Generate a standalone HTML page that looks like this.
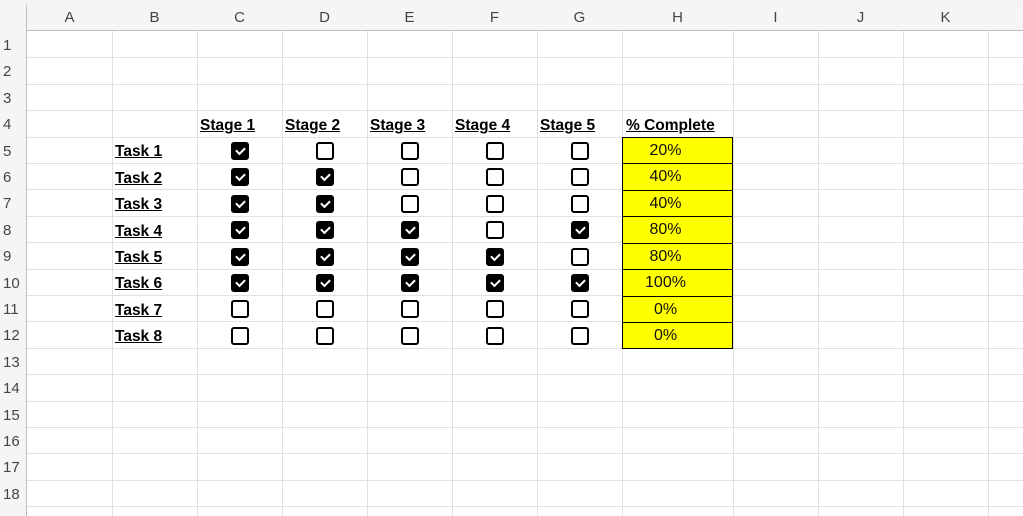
<!DOCTYPE html>
<html><head><meta charset="utf-8"><style>
body{margin:0;width:1023px;height:516px;overflow:hidden;background:#fff;font-family:"Liberation Sans",sans-serif;position:relative}
.a{position:absolute}
.vl{position:absolute;top:31px;bottom:0;width:1px;background:#e1e1e1}
.hl{position:absolute;left:27px;right:0;height:1px;background:#e1e1e1}
.ch{position:absolute;top:5px;height:26px;line-height:26px;text-align:center;font-size:15px;color:#444}
.rh{position:absolute;left:0;width:24px;text-align:left;padding-left:3px;font-size:15px;color:#444}
.b{position:absolute;font-weight:bold;font-size:15.5px;text-decoration:underline;color:#000}
.cb{position:absolute;width:14px;height:14px;border:2px solid #000;border-radius:3px;background:#fff}
.cb.on{background:#000}
.cb.on:after{content:"";position:absolute;left:3px;width:7px;height:4px;border-left:2px solid #fff;border-bottom:2px solid #fff;transform:rotate(-45deg);transform-origin:center;top:3px}
.y{position:absolute;left:622px;width:111px;background:#ffff00;border:1px solid #000;box-sizing:border-box;text-align:center;padding-right:24px;font-size:16px;line-height:26px;color:#111}
</style></head><body>
<div class="a" style="left:0;top:0;width:1023px;height:5px;background:#f3f3f3"></div>
<div class="a" style="left:0;top:5px;width:1023px;height:26px;background:#f5f5f5;border-bottom:1px solid #bdbdbd;box-sizing:border-box"></div>
<div class="a" style="left:0;top:5px;width:27px;height:511px;background:#f5f5f5;border-right:1px solid #bdbdbd;box-sizing:border-box"></div>
<div id="g"></div>
<div class="ch" style="left:27px;width:85px">A</div>
<div class="ch" style="left:112px;width:85px">B</div>
<div class="ch" style="left:197px;width:85px">C</div>
<div class="ch" style="left:282px;width:85px">D</div>
<div class="ch" style="left:367px;width:85px">E</div>
<div class="ch" style="left:452px;width:85px">F</div>
<div class="ch" style="left:537px;width:85px">G</div>
<div class="ch" style="left:622px;width:111px">H</div>
<div class="ch" style="left:733px;width:85px">I</div>
<div class="ch" style="left:818px;width:85px">J</div>
<div class="ch" style="left:903px;width:85px">K</div>
<div class="rh" style="top:37px">1</div>
<div class="rh" style="top:63px">2</div>
<div class="rh" style="top:90px">3</div>
<div class="rh" style="top:116px">4</div>
<div class="rh" style="top:143px">5</div>
<div class="rh" style="top:169px">6</div>
<div class="rh" style="top:195px">7</div>
<div class="rh" style="top:222px">8</div>
<div class="rh" style="top:248px">9</div>
<div class="rh" style="top:275px">10</div>
<div class="rh" style="top:301px">11</div>
<div class="rh" style="top:327px">12</div>
<div class="rh" style="top:354px">13</div>
<div class="rh" style="top:380px">14</div>
<div class="rh" style="top:407px">15</div>
<div class="rh" style="top:433px">16</div>
<div class="rh" style="top:459px">17</div>
<div class="rh" style="top:486px">18</div>
<div class="b" style="left:200px;top:117px">Stage 1</div>
<div class="b" style="left:285px;top:117px">Stage 2</div>
<div class="b" style="left:370px;top:117px">Stage 3</div>
<div class="b" style="left:455px;top:117px">Stage 4</div>
<div class="b" style="left:540px;top:117px">Stage 5</div>
<div class="b" style="left:626px;top:117px">% Complete</div>
<div class="b" style="left:115px;top:143px">Task 1</div>
<div class="b" style="left:115px;top:170px">Task 2</div>
<div class="b" style="left:115px;top:196px">Task 3</div>
<div class="b" style="left:115px;top:223px">Task 4</div>
<div class="b" style="left:115px;top:249px">Task 5</div>
<div class="b" style="left:115px;top:275px">Task 6</div>
<div class="b" style="left:115px;top:302px">Task 7</div>
<div class="b" style="left:115px;top:328px">Task 8</div>
<div class="y" style="top:137px;height:27px">20%</div>
<div class="y" style="top:163px;height:28px">40%</div>
<div class="y" style="top:190px;height:27px">40%</div>
<div class="y" style="top:216px;height:28px">80%</div>
<div class="y" style="top:243px;height:27px">80%</div>
<div class="y" style="top:269px;height:28px">100%</div>
<div class="y" style="top:296px;height:27px">0%</div>
<div class="y" style="top:322px;height:27px">0%</div>
<script>
var g=document.getElementById('g'),h='';
[112,197,282,367,452,537,622,733,818,903,988].forEach(function(x){h+='<div class="vl" style="left:'+x+'px"></div>';});
for(var n=1;n<=18;n++){h+='<div class="hl" style="top:'+Math.round(31+26.4*n)+'px"></div>';}
var pat=[[1,0,0,0,0],[1,1,0,0,0],[1,1,0,0,0],[1,1,1,0,1],[1,1,1,1,0],[1,1,1,1,1],[0,0,0,0,0],[0,0,0,0,0]];
var cx=[239.5,324.5,409.5,494.5,579.5];
pat.forEach(function(r,i){var cy=151+26.4*i;r.forEach(function(v,j){h+='<div class="cb'+(v?' on':'')+'" style="left:'+Math.round(cx[j]-9)+'px;top:'+Math.round(cy-9)+'px"></div>';});});
g.innerHTML=h;
</script>
</body></html>
